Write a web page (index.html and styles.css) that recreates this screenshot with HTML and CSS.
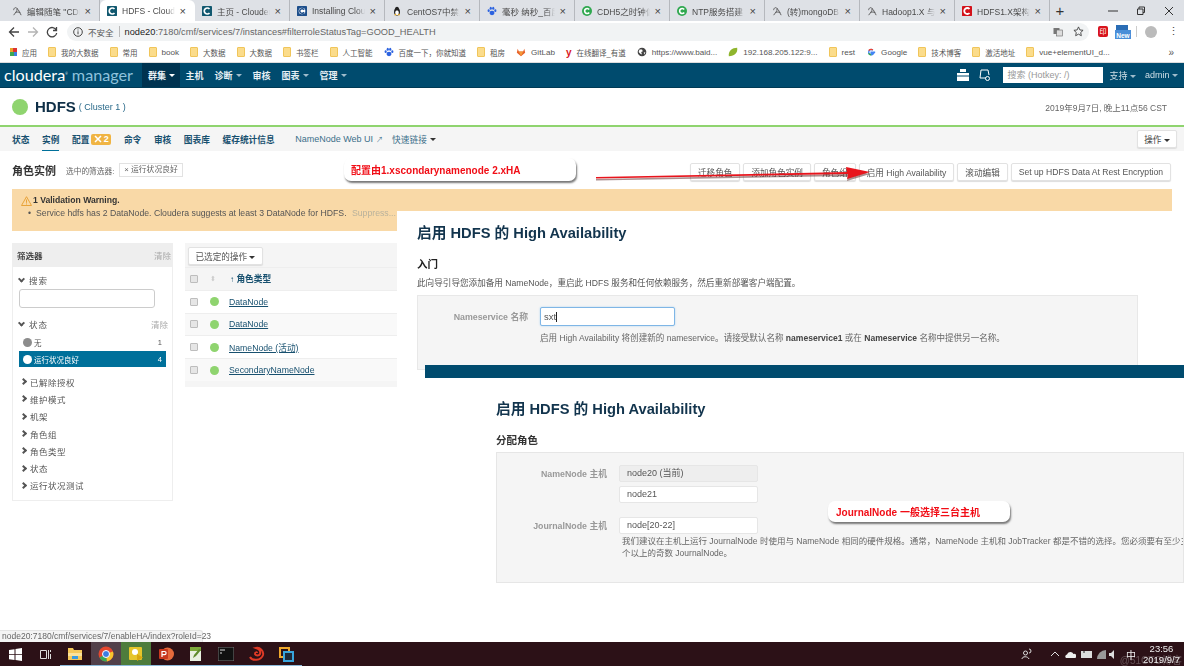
FILE: index.html
```html
<!DOCTYPE html>
<html lang="zh">
<head>
<meta charset="utf-8">
<title>HDFS - Cloudera Manager</title>
<link rel="stylesheet" href="styles.css">
</head>
<body>
<svg class="sprite" width="0" height="0">
  <symbol id="i-c" viewBox="0 0 12 12"><rect width="12" height="12" rx="1" fill="#11586f"/><path d="M9 3.6A3.6 3.6 0 1 0 9 8.4" fill="none" stroke="#fff" stroke-width="2"/></symbol>
  <symbol id="i-c2" viewBox="0 0 12 12"><rect width="12" height="12" rx="1" fill="#1d4f8c"/><circle cx="6" cy="6" r="4" fill="#fff"/><path d="M8.5 4.5A2.8 2.8 0 1 0 8.5 7.5" fill="none" stroke="#1d4f8c" stroke-width="1.8"/></symbol>
  <symbol id="i-r" viewBox="0 0 12 12"><rect width="12" height="12" rx="1" fill="#d3121a"/><path d="M9 3.6A3.6 3.6 0 1 0 9 8.4" fill="none" stroke="#fff" stroke-width="2.2"/></symbol>
  <symbol id="i-g" viewBox="0 0 12 12"><circle cx="6" cy="6" r="6" fill="#2fa84f"/><path d="M8.6 4.2A3 3 0 1 0 8.6 7.8" fill="none" stroke="#fff" stroke-width="2"/></symbol>
  <symbol id="i-s" viewBox="0 0 12 12"><path d="M2 5c0-3 3-4 4-2 1 3-3 6-4 8M6 3c2 1 3 5 5 8M4 8c2-1 4-1 6 0" fill="none" stroke="#555" stroke-width="1.1"/></symbol>
  <symbol id="i-t" viewBox="0 0 12 12"><ellipse cx="6" cy="7" rx="3.6" ry="4.6" fill="#222"/><ellipse cx="6" cy="8" rx="2.2" ry="3" fill="#fff"/><circle cx="6" cy="3" r="2.2" fill="#222"/><path d="M2.5 11h3l-1-2zM6.5 11h3l-1-2z" fill="#eda913"/></symbol>
  <symbol id="i-p" viewBox="0 0 12 12"><g fill="#2b62e0"><ellipse cx="6" cy="8.4" rx="3" ry="2.6"/><ellipse cx="2" cy="5.6" rx="1.3" ry="1.7"/><ellipse cx="4.5" cy="2.8" rx="1.3" ry="1.8"/><ellipse cx="7.5" cy="2.8" rx="1.3" ry="1.8"/><ellipse cx="10" cy="5.6" rx="1.3" ry="1.7"/></g></symbol>
  <symbol id="i-fox" viewBox="0 0 12 12"><path d="M6 11 1 7l1-5 1.500 3.500h5L10 2l1 5z" fill="#e8632b"/><path d="M6 11 3.500 5.500h5z" fill="#f39b3a"/></symbol>
  <symbol id="i-globe" viewBox="0 0 12 12"><circle cx="6" cy="6" r="5.200" fill="#444"/><path d="M3 3h3l1 2-2 1 1 3-2-1-2-2zM8 7l2-1-1 3z" fill="#fff"/></symbol>
  <symbol id="i-leaf" viewBox="0 0 12 12"><path d="M1 11C0 5 5 1 11 1c1 6-3 10-10 10z" fill="#8fb52d"/></symbol>
  <symbol id="i-goog" viewBox="0 0 12 12"><path d="M11 6.200H6.200v1.800h2.700A3.100 3.100 0 1 1 8.200 3.700" fill="none" stroke="#4285f4" stroke-width="1.700"/><path d="M3.300 4.400A3.200 3.200 0 0 1 8.200 3.700" fill="none" stroke="#ea4335" stroke-width="1.700"/><path d="M3.100 7.400A3.200 3.200 0 0 0 6.200 9.300" fill="none" stroke="#34a853" stroke-width="1.700"/></symbol>
</svg>

<div class="page">
  <header class="chrome-tabs">
    <div class="tab"><svg class="ico"><use href="#i-s"/></svg><span class="tab-t">编辑随笔 "CDH</span><span class="tab-x">×</span></div>
    <div class="tab is-active"><svg class="ico"><use href="#i-c"/></svg><span class="tab-t">HDFS - Clouder</span><span class="tab-x">×</span></div>
    <div class="tab"><svg class="ico"><use href="#i-c"/></svg><span class="tab-t">主页 - Clouder</span><span class="tab-x">×</span></div>
    <div class="tab"><svg class="ico"><use href="#i-c2"/></svg><span class="tab-t">Installing Cloud</span><span class="tab-x">×</span></div>
    <div class="tab"><svg class="ico"><use href="#i-t"/></svg><span class="tab-t">CentOS7中禁用</span><span class="tab-x">×</span></div>
    <div class="tab"><svg class="ico"><use href="#i-p"/></svg><span class="tab-t">毫秒 纳秒_百度</span><span class="tab-x">×</span></div>
    <div class="tab"><svg class="ico"><use href="#i-g"/></svg><span class="tab-t">CDH5之时钟偏</span><span class="tab-x">×</span></div>
    <div class="tab"><svg class="ico"><use href="#i-g"/></svg><span class="tab-t">NTP服务搭建 -</span><span class="tab-x">×</span></div>
    <div class="tab"><svg class="ico"><use href="#i-s"/></svg><span class="tab-t">(转)mongoDB</span><span class="tab-x">×</span></div>
    <div class="tab"><svg class="ico"><use href="#i-s"/></svg><span class="tab-t">Hadoop1.X 与</span><span class="tab-x">×</span></div>
    <div class="tab"><svg class="ico"><use href="#i-r"/></svg><span class="tab-t">HDFS1.X架构和</span><span class="tab-x">×</span></div>
    <span class="tab-plus">+</span>
    <div class="win-ctl">
      <svg width="10" height="10" viewBox="0 0 10 10"><path d="M0 5h10" stroke="#333"/></svg>
      <svg width="10" height="10" viewBox="0 0 10 10"><path d="M1.500 3h5.500v5.500H1.500zM3 3V1h5.500v5.500H7" fill="none" stroke="#333"/></svg>
      <svg width="10" height="10" viewBox="0 0 10 10"><path d="M1 1l8 8M9 1l-8 8" stroke="#333"/></svg>
    </div>
  </header>

  <div class="addr-row">
    <svg class="nav-b" width="12" height="12" viewBox="0 0 12 12"><path d="M11 6H1.500M6 1.500 1.500 6 6 10.500" fill="none" stroke="#444" stroke-width="1.300"/></svg>
    <svg class="nav-b" width="12" height="12" viewBox="0 0 12 12"><path d="M1 6h9.500M6 1.500 10.500 6 6 10.500" fill="none" stroke="#b4b4b4" stroke-width="1.300"/></svg>
    <svg class="nav-b" width="12" height="12" viewBox="0 0 12 12"><path d="M10.300 4.200A4.700 4.700 0 1 0 10.700 7M10.500 1v3.500H7" fill="none" stroke="#444" stroke-width="1.300"/></svg>
    <div class="omnibox">
      <svg width="10" height="10" viewBox="0 0 10 10"><circle cx="5" cy="5" r="4.300" fill="none" stroke="#444"/><path d="M5 4.300v3M5 2.500v1" stroke="#444"/></svg>
      <span class="insecure">不安全</span><span class="omni-sep"></span>
      <span class="url"><b>node20</b>:7180/cmf/services/7/instances#filterroleStatusTag=GOOD_HEALTH</span>
      <svg class="omni-end" width="10" height="10" viewBox="0 0 10 10"><rect x=".5" y="1" width="6" height="6" fill="#777"/><rect x="3.500" y="3" width="6" height="6" fill="#ddd" stroke="#666" stroke-width=".6"/></svg>
      <svg class="omni-star" width="11" height="11" viewBox="0 0 12 12"><path d="M6 1l1.500 3.300 3.500.4-2.600 2.400.7 3.500L6 8.900l-3.100 1.700.7-3.500L1 4.700l3.500-.4z" fill="none" stroke="#444"/></svg>
    </div>
    <div class="ext-area">
      <span class="ext-red">印</span>
      <span class="ext-new"><i></i>New</span>
      <span class="ext-sep"></span>
      <span class="avatar"></span>
      <span class="kebab">⋮</span>
    </div>
  </div>

  <nav class="bookmarks">
    <span class="bm bm-apps"><span class="apps-grid"></span>应用</span>
    <span class="bm"><i class="fold"></i>我的大数据</span>
    <span class="bm"><i class="fold"></i>常用</span>
    <span class="bm lat"><i class="fold"></i>book</span>
    <span class="bm"><i class="fold"></i>大数据</span>
    <span class="bm"><i class="fold"></i>大数据</span>
    <span class="bm"><i class="fold"></i>书签栏</span>
    <span class="bm"><i class="fold"></i>人工智能</span>
    <span class="bm"><svg class="ico"><use href="#i-p"/></svg>百度一下，你就知道</span>
    <span class="bm"><i class="fold"></i>租房</span>
    <span class="bm lat"><svg class="ico"><use href="#i-fox"/></svg>GitLab</span>
    <span class="bm"><b class="bm-y">y</b>在线翻译_有道</span>
    <span class="bm lat"><svg class="ico"><use href="#i-globe"/></svg>https://www.baid...</span>
    <span class="bm lat"><svg class="ico"><use href="#i-leaf"/></svg>192.168.205.122:9...</span>
    <span class="bm lat"><i class="fold"></i>rest</span>
    <span class="bm lat"><svg class="ico"><use href="#i-goog"/></svg>Google</span>
    <span class="bm"><i class="fold"></i>技术博客</span>
    <span class="bm"><i class="fold"></i>激活地址</span>
    <span class="bm lat"><i class="fold"></i>vue+elementUI_d...</span>
    <span class="bm-more">»</span>
  </nav>

  <div class="cm-nav">
    <div class="logo">cloudera<sup>®</sup> <em>manager</em></div>
    <ul class="cm-menu">
      <li class="is-on">群集 <i class="caret"></i></li>
      <li>主机</li>
      <li>诊断 <i class="caret dim"></i></li>
      <li>审核</li>
      <li>图表 <i class="caret dim"></i></li>
      <li>管理 <i class="caret dim"></i></li>
    </ul>
    <div class="cm-right">
      <svg width="12" height="12" viewBox="0 0 12 12"><path d="M0 4h12v8H0zM3 0h6v3H3z" fill="#fff"/><path d="M0 7h12" stroke="#004b6e"/></svg>
      <svg width="12" height="12" viewBox="0 0 12 12"><path d="M2 9 3 1h7l1 5M2 9h6" fill="none" stroke="#fff"/><circle cx="9.500" cy="9.500" r="2" fill="none" stroke="#fff"/></svg>
      <input class="cm-search" placeholder="搜索 (Hotkey: /)">
      <span class="cm-link">支持 <i class="caret dim"></i></span>
      <span class="cm-link">admin <i class="caret dim"></i></span>
    </div>
  </div>

  <div class="svc-head">
    <i class="dot dot-lg"></i>
    <h1>HDFS</h1>
    <span class="cluster">( Cluster 1 )</span>
    <span class="svc-date">2019年9月7日, 晚上11点56 CST</span>
  </div>

  <div class="svc-tabs">
    <a>状态</a>
    <a class="is-active">实例</a>
    <a class="with-badge">配置<span class="badge"><svg width="8" height="8" viewBox="0 0 8 8"><path d="M1 1l6 6M7 1 1 7" stroke="#fff" stroke-width="1.500"/></svg> 2</span></a>
    <a>命令</a>
    <a>审核</a>
    <a>图表库</a>
    <a>缓存统计信息</a>
    <a class="plain lead">NameNode Web UI <small>↗</small></a>
    <a class="plain">快速链接 <i class="caret dark"></i></a>
    <button class="btn btn-ops">操作 <i class="caret dark"></i></button>
  </div>

  <div class="inst-head">
    <h2 class="inst-title">角色实例</h2>
    <span class="filter-lab">选中的筛选器:</span>
    <span class="chip">× 运行状况良好</span>
    <div class="inst-btns">
      <button class="btn">迁移角色</button>
      <button class="btn">添加角色实例</button>
      <button class="btn">角色组</button>
      <button class="btn">启用 High Availability</button>
      <button class="btn">滚动编辑</button>
      <button class="btn">Set up HDFS Data At Rest Encryption</button>
    </div>
  </div>

  <div class="warn">
    <div class="warn-t"><svg width="11" height="10" viewBox="0 0 11 10"><path d="M5.500.7 10.500 9.500H.5z" fill="none" stroke="#e8a33a"/><path d="M5.500 3.500v3.300M5.500 7.500v1" stroke="#e8a33a"/></svg> <b>1 Validation Warning.</b></div>
    <div class="warn-l"><span class="warn-b">•</span>Service hdfs has 2 DataNode. Cloudera suggests at least 3 DataNode for HDFS. <span class="warn-s">Suppress...</span></div>
  </div>

  <div class="workspace">
    <aside class="filters">
      <div class="f-head"><b>筛选器</b><span class="clear">清除</span></div>
      <div class="f-sec f-open"><i class="chev-d"></i>搜索</div>
      <input class="f-input">
      <div class="f-sec f-open f-status"><i class="chev-d"></i>状态<span class="clear">清除</span></div>
      <div class="f-opt"><i class="dot dot-gray"></i>无<span class="cnt">1</span></div>
      <div class="f-opt is-sel"><i class="dot dot-white"></i>运行状况良好<span class="cnt">4</span></div>
      <ul class="f-list">
        <li><i class="chev-r"></i>已解除授权</li>
        <li><i class="chev-r"></i>维护模式</li>
        <li><i class="chev-r"></i>机架</li>
        <li><i class="chev-r"></i>角色组</li>
        <li><i class="chev-r"></i>角色类型</li>
        <li><i class="chev-r"></i>状态</li>
        <li><i class="chev-r"></i>运行状况测试</li>
      </ul>
    </aside>
    <section class="roles">
      <div class="r-bar"><button class="btn btn-sel">已选定的操作 <i class="caret dark"></i></button></div>
      <div class="r-row r-head"><i class="cb"></i><span class="sort">⬍</span><b><span class="sort-a">↑</span> 角色类型</b></div>
      <div class="r-row"><i class="cb"></i><i class="dot"></i><a>DataNode</a></div>
      <div class="r-row alt"><i class="cb"></i><i class="dot"></i><a>DataNode</a></div>
      <div class="r-row"><i class="cb"></i><i class="dot"></i><a>NameNode (活动)</a></div>
      <div class="r-row alt"><i class="cb"></i><i class="dot"></i><a>SecondaryNameNode</a></div>
    </section>
  </div>

  <div class="sheet">
    <h2 class="ha-title">启用 HDFS 的 High Availability</h2>
    <h3 class="ha-sub">入门</h3>
    <p class="ha-desc">此向导引导您添加备用 NameNode，重启此 HDFS 服务和任何依赖服务，然后重新部署客户端配置。</p>
    <div class="ha-panel">
      <label class="ha-label">Nameservice 名称</label>
      <div class="ha-fake-input">sxt<span class="cursor"></span></div>
      <p class="ha-help">启用 High Availability 将创建新的 nameservice。请接受默认名称 <b>nameservice1</b> 或在 <b>Nameservice</b> 名称中提供另一名称。</p>
    </div>
    <div class="ha-bar"></div>
    <div class="second">
      <h2 class="ha-title">启用 HDFS 的 High Availability</h2>
      <h3 class="ha-sub sub2">分配角色</h3>
      <div class="assign">
        <div class="a-row"><label>NameNode 主机</label><div class="a-in ro">node20 (当前)</div></div>
        <div class="a-row r2"><label></label><div class="a-in">node21</div></div>
        <div class="a-row r3"><label>JournalNode 主机</label><div class="a-in">node[20-22]</div></div>
        <p class="a-help">我们建议在主机上运行 JournalNode 时使用与 NameNode 相同的硬件规格。通常，NameNode 主机和 JobTracker 都是不错的选择。您必须要有至少三<br>个以上的奇数 JournalNode。</p>
      </div>
    </div>
  </div>

  <div class="callout c1">配置由1.xscondarynamenode 2.xHA</div>
  <div class="callout c2">JournalNode 一般选择三台主机</div>
  <svg class="arrow" width="280" height="24" viewBox="0 0 280 24">
    <path d="M6 16.500 258 12l-1 5 23-7-24-5 1 5L6 15z" fill="#5a2020" opacity=".5" transform="translate(0 2)"/>
    <path d="M6 16.500 258 12l-1 5 23-7-24-5 1 5L6 15z" fill="#e8141c"/>
  </svg>
  <div class="status-tip">node20:7180/cmf/services/7/enableHA/index?roleId=23</div>

  <footer class="taskbar">
    <span class="tb"><svg width="13" height="13" viewBox="0 0 13 13"><path d="M0 2l5.500-.8v5H0zM6.500 1l6.500-1v6.200H6.500zM0 7h5.500v5L0 11.200zM6.500 7H13v6l-6.500-1z" fill="#fff"/></svg></span>
    <span class="tb"><svg width="13" height="13" viewBox="0 0 13 13"><path d="M1.500 2.500h6v8h-6zM9.500 2v9M11.500 2v2M11.500 6v5" fill="none" stroke="#ddd"/></svg></span>
    <span class="tb"><svg width="16" height="14" viewBox="0 0 16 14"><path d="M1 1h5l1 2h8v10H1z" fill="#f5c85a"/><path d="M1 6h14v3H1z" fill="#fbe29a"/><path d="M5 9h6v3H5z" fill="#3a9be0"/></svg></span>
    <span class="tb on"><svg width="16" height="16" viewBox="0 0 16 16"><circle cx="8" cy="8" r="7.500" fill="#e4472f"/><path d="M8 8 1.500 11.500A7.500 7.500 0 0 0 9 15.400z" fill="#3aa655"/><path d="M8 8l6.900-2.600A7.500 7.500 0 0 1 9 15.400z" fill="#f7c52d"/><circle cx="8" cy="8" r="3.500" fill="#3b7de2" stroke="#fff"/></svg></span>
    <span class="tb on2"><svg width="16" height="16" viewBox="0 0 16 16"><rect x="1" y="1" width="13" height="13" rx="1" fill="#e6c52a"/><circle cx="7" cy="6" r="3" fill="#fff"/><path d="M9 8l6 3.500-6 3.500z" fill="#d9a70f"/></svg></span>
    <span class="tb"><svg width="16" height="16" viewBox="0 0 16 16"><circle cx="9.500" cy="8" r="6.500" fill="#e66a3c"/><rect x="1" y="3" width="9" height="10" rx="1" fill="#c8391f"/><path d="M4 11V5.500h2.500a1.600 1.600 0 0 1 0 3.200H4" fill="none" stroke="#fff" stroke-width="1.200"/></svg></span>
    <span class="tb"><svg width="16" height="16" viewBox="0 0 16 16"><path d="M2 1h11v14H2z" fill="#e9f0e0"/><path d="M2 1h11v4H2z" fill="#7da83a"/><path d="M5 12l1-3 5-6 2 1-5 6z" fill="#5f8a2c"/></svg></span>
    <span class="tb"><svg width="16" height="14" viewBox="0 0 16 14"><rect width="16" height="14" fill="#111" stroke="#777"/><path d="M2 3h5M2 6h2" stroke="#ddd"/></svg></span>
    <span class="tb"><svg width="16" height="16" viewBox="0 0 16 16"><path d="M1 11c2 4 11 4 13-2 1-4-3-8-7-7 3 1 5 3 4 6-1 2-4 2-5 0 0-2 2-2 2-1" fill="none" stroke="#df3a26" stroke-width="2"/></svg></span>
    <span class="tb"><svg width="15" height="15" viewBox="0 0 15 15"><path d="M1 1h9v9H1z" fill="none" stroke="#f0a82c" stroke-width="2"/><path d="M5 5h9v9H5z" fill="#1e2a3a" stroke="#38a4dc" stroke-width="2"/></svg></span>
    <div class="tray">
      <svg width="12" height="12" viewBox="0 0 12 12"><circle cx="4.500" cy="5" r="2" fill="none" stroke="#ddd"/><path d="M1 11c0-3 6-3 7 0M8 1a2 2 0 1 1 0 4" fill="none" stroke="#ddd"/></svg>
      <svg class="t-up" width="10" height="6" viewBox="0 0 10 6"><path d="M1 5l4-4 4 4" fill="none" stroke="#ddd"/></svg>
      <svg width="11" height="7" viewBox="0 0 11 7"><path d="M1 7a2 2 0 0 1 1-3.500A3.500 3.500 0 0 1 8.500 3 2 2 0 0 1 10 7z" fill="#eee"/></svg>
      <svg width="11" height="7" viewBox="0 0 11 7"><rect width="11" height="7" y="0" fill="#ddd"/><path d="M3 0v2" stroke="#222"/></svg>
      <svg width="9" height="9" viewBox="0 0 9 9"><path d="M0 9a9 9 0 0 1 9-9v9z" fill="#999"/></svg>
      <svg class="t-snd" width="9" height="9" viewBox="0 0 9 9"><path d="M0 3h2l3-3v9L2 6H0z" fill="#ddd"/></svg>
      <span class="t-ime">中</span>
      <div class="clock"><span>23:56</span><span>2019/9/7</span></div>
      <span class="wm">@51CTO博客</span>
    </div>
  </footer>
</div>
</body>
</html>
```
FILE: styles.css
```css
* { box-sizing: border-box; }
html, body { margin: 0; padding: 0; width: 1184px; height: 666px; overflow: hidden; background: #fff; }
body { font-family: "Liberation Sans", "Noto Sans CJK SC", sans-serif; font-size: 9.5px; color: #555; }
.sprite { position: absolute; }
h1, h2, h3, p, ul { margin: 0; padding: 0; }
ul { list-style: none; }
i { font-style: normal; }
.page { position: relative; width: 1184px; height: 666px; display: flex; flex-direction: column; overflow: hidden; filter: blur(.35px); }

/* browser tab strip */
.chrome-tabs { height: 21px; background: #dee1e6; display: flex; align-items: stretch; padding-left: 5px; flex: none; }
.tab { width: 95px; flex: none; display: flex; align-items: center; padding: 0 8px 0 7px; gap: 5px; font-size: 8.500px; color: #4a4a4a; border-right: 1px solid #b5b8bd; }
.tab.is-active { background: #fff; border-radius: 6px 6px 0 0; border-right-color: transparent; }
.ico { width: 10px; height: 10px; flex: none; }
.tab-t { flex: 1; white-space: nowrap; overflow: hidden; -webkit-mask-image: linear-gradient(90deg, #000 85%, transparent); mask-image: linear-gradient(90deg, #000 85%, transparent); }
.tab-x { font-size: 11px; color: #444; flex: none; }
.tab-plus { width: 20px; text-align: center; font-size: 15px; line-height: 21px; color: #333; }
.win-ctl { margin-left: auto; display: flex; align-items: center; gap: 18px; padding-right: 10px; }

/* address row */
.addr-row { height: 21px; flex: none; background: #fff; display: flex; align-items: center; padding-left: 8px; gap: 7px; }
.omnibox { margin-left: 2px; width: 1022px; height: 18px; background: #f1f3f4; border-radius: 9px; display: flex; align-items: center; padding: 0 5px 0 6px; font-size: 8.500px; color: #666; }
.insecure { margin-left: 5px; color: #555; }
.omni-sep { width: 1px; height: 11px; background: #bbb; margin: 0 5px; }
.url { color: #666; font-size: 9.250px; white-space: nowrap; }
.url b { font-weight: 400; color: #222; }
.omni-end { margin-left: auto; }
.omni-star { margin-left: 10px; }
.ext-area { display: flex; align-items: center; margin-left: 2px; flex: 1; }
.ext-red { width: 10px; height: 11px; background: #d8141c; color: #fff; font-size: 7px; line-height: 11px; text-align: center; border-radius: 2px; }
.ext-new { margin-left: 7px; position: relative; width: 16px; height: 15px; color: #fff; font-size: 6.500px; line-height: 7px; font-weight: 700; text-align: center; padding-top: 8px; background: linear-gradient(#fff 40%, #4a8ed8 40%); }
.ext-new i { position: absolute; left: 1px; top: 1px; width: 12px; height: 5px; background: #2a6db5; }
.ext-sep { width: 1px; height: 11px; background: #ccc; margin-left: 5px; }
.avatar { width: 12px; height: 12px; border-radius: 50%; background: #bbb; margin-left: 8px; }
.kebab { margin-left: 11px; font-size: 11px; color: #444; }

/* bookmarks */
.bookmarks { height: 21px; flex: none; display: flex; align-items: center; padding-left: 10px; gap: 11px; font-size: 7.500px; color: #555; background: #fff; white-space: nowrap; border-bottom: 1px solid #ddd; }
.bm { display: inline-flex; align-items: center; gap: 5px; }
.bm.lat { font-size: 8.100px; }
.fold { width: 8px; height: 10px; background: #fbdc8b; border: 1px solid #f0c55a; border-radius: 1px; }
.apps-grid { width: 7px; height: 8px; background: conic-gradient(#d33 0 25%, #3b7de2 0 50%, #3aa655 0 75%, #e8a32a 0); }
.bm-y { color: #d8141c; font-size: 10px; font-weight: 700; }
.bm-more { margin-left: auto; padding-right: 10px; font-size: 10px; }

/* cloudera nav */
.cm-nav { height: 25px; flex: none; background: #004b6e; display: flex; align-items: stretch; color: #fff; border-bottom: 1px solid #003a55; }
.logo { width: 142px; padding-left: 4px; font-family: Lato, "Liberation Sans", sans-serif; font-size: 16.200px; line-height: 23px; color: #fff; white-space: nowrap; }
.logo sup { font-size: 3px; }
.logo em { font-style: normal; color: #8fc2dc; }
.cm-menu { display: flex; font-size: 9px; font-weight: 700; color: #e8f0f4; white-space: nowrap; }
.cm-menu li { display: flex; align-items: center; gap: 3px; padding: 0 5.500px; }
.cm-menu li.is-on { background: #003350; width: 38px; padding: 0 0 0 6px; }
.caret { width: 0; height: 0; border: 3px solid transparent; border-top-color: #fff; border-bottom: 0; display: inline-block; vertical-align: middle; flex: none; }
.caret.dim { border-top-color: #9fbccb; }
.caret.dark { border-top-color: #333; }
.cm-right { margin-left: auto; display: flex; align-items: center; gap: 9px; padding-right: 6px; font-size: 9px; color: #d0dfe7; }
.cm-search { width: 100px; height: 16px; border: 0; padding: 0 4px; font-size: 9px; font-family: inherit; background: #fff; margin: 0 -3px 0 4px; }
.cm-search::placeholder { color: #999; }
.cm-link { white-space: nowrap; }

/* service head */
.svc-head { height: 39px; flex: none; display: flex; align-items: center; padding: 0 17px 0 12px; border-bottom: 2px solid #8fd46f; }
.dot { width: 9px; height: 9px; border-radius: 50%; background: #8fd46f; display: inline-block; flex: none; }
.dot-lg { width: 16px; height: 16px; }
.svc-head h1 { margin-left: 7px; font-size: 15px; color: #0f2f47; font-weight: 700; }
.cluster { margin-left: 3px; font-size: 9px; color: #2a6a8a; }
.svc-date { margin-left: auto; font-size: 8.500px; color: #666; }

/* tabs */
.svc-tabs { height: 24px; flex: none; background: #f5f5f5; display: flex; align-items: center; padding: 0 7px 0 12px; font-size: 8.700px; color: #17506f; font-weight: 700; position: relative; }
.svc-tabs a { margin-right: 12.600px; white-space: nowrap; display: inline-flex; align-items: center; height: 24px; gap: 3px; }
.svc-tabs a.is-active { box-shadow: 0 -1px 0 #00709a inset; color: #17506f; }
.svc-tabs a.plain { font-weight: 400; color: #3c6f8a; }
.svc-tabs a.lead { margin-left: 8px; margin-right: 9px; font-size: 9px; }
.svc-tabs a small { font-size: 7px; }
.badge { margin-left: -1px; background: #f0b443; color: #fff; width: 20px; height: 11px; border-radius: 2px; display: inline-flex; align-items: center; justify-content: center; gap: 2px; font-size: 9px; }
.btn { height: 18px; padding: 0 7px; font: inherit; font-size: 8.600px; font-weight: 400; color: #555; background: #fff; border: 1px solid #e2e2e2; border-radius: 2px; white-space: nowrap; box-shadow: 0 1px 1px #ddd; }
.btn-ops { margin-left: auto; width: 40px; padding: 0; color: #444; }

/* instance head */
.inst-head { height: 38px; flex: none; display: flex; align-items: center; padding: 0 13px 0 12px; }
.inst-title { font-size: 11px; color: #333; font-weight: 700; }
.filter-lab { margin-left: 10px; font-size: 7.700px; color: #666; }
.chip { margin-left: 5px; border: 1px solid #e2e2e2; padding: 0 4px; height: 14px; line-height: 12px; font-size: 7.800px; color: #666; }
.inst-btns { margin-left: auto; display: flex; gap: 3px; margin-top: 4px; }

/* warning */
.warn { flex: none; margin: 0 12px; height: 42px; background: #f9d9a7; padding: 5px 9px; color: #444; }
.warn-t { display: flex; align-items: center; gap: 1px; font-size: 8.600px; color: #333; line-height: 13px; }
.warn-l { margin-top: 0; font-size: 8.700px; line-height: 12px; padding-left: 7px; white-space: nowrap; color: #555; }
.warn-b { margin-right: 5px; }
.warn-s { color: #b9b29c; margin-left: 3px; }

/* workspace */
.workspace { flex: none; display: flex; align-items: flex-start; padding: 12px 0 0 12px; gap: 12px; }
.filters { width: 161px; height: 258px; border: 1px solid #eee; border-top: 0; flex: none; color: #555; }
.f-head { height: 24px; margin: 0 -1px; background: #eee; display: flex; align-items: center; justify-content: space-between; padding: 0 2px 0 5px; font-size: 8.500px; color: #444; }
.f-head b { font-weight: 700; }
.clear { color: #aaa; font-size: 8.500px; }
.f-sec { display: flex; align-items: center; padding-left: 4px; height: 14px; margin-top: 6px; letter-spacing: 1px; font-size: 8.500px; }
.chev-d { width: 5px; height: 5px; border: solid #555; border-width: 0 2px 2px 0; transform: rotate(45deg) translate(-1px,-1px); margin: 0 5px 0 2px; }
.chev-r { width: 5px; height: 5px; border: solid #555; border-width: 2px 2px 0 0; transform: rotate(45deg); margin: 0 4px 0 0; flex: none; }
.f-input { display: block; margin: 2px 0 0 6px; width: 136px; height: 19px; border: 1px solid #ccc; border-radius: 3px; background: #fff; }
.f-status { margin-top: 9px; padding-right: 4px; }
.f-status .clear { margin-left: auto; letter-spacing: 0; }
.f-opt { display: flex; align-items: center; margin: 3px 6px 0; height: 16px; padding: 0 4px; font-size: 7.500px; gap: 2px; }
.f-opt .cnt { margin-left: auto; }
.dot-gray { background: #8c8c8c; }
.f-opt.is-sel { background: #00709a; color: #fff; margin-top: 1px; }
.dot-white { background: #fff; }
.f-list { margin-top: 6px; }
.f-list li { display: flex; align-items: center; height: 17.300px; padding-left: 8px; font-size: 8.500px; letter-spacing: .5px; }

.roles { width: 212px; height: 144px; background: #f5f5f5; flex: none; }
.r-bar { height: 24px; padding: 4px 3px 0; }
.btn-sel { width: 75px; padding: 0; }
.r-row { display: flex; align-items: center; height: 22.800px; padding-left: 5px; background: #fff; border-top: 1px solid #eee; font-size: 8.700px; }
.r-row.alt { background: #f9f9f9; }
.r-row a { margin-left: 10px; color: #17506f; text-decoration: underline; white-space: nowrap; }
.r-row .dot { margin-left: 12px; }
.r-head { background: #f5f5f5; color: #17506f; }
.r-head b { margin-left: 11px; font-weight: 700; }
.sort { margin-left: 12px; width: 9px; color: #ccc; font-size: 7px; }
.sort-a { font-size: 8px; }
.cb { width: 8px; height: 8px; background: #e6e6e6; border: 1px solid #bdbdbd; border-radius: 1px; flex: none; }

/* pasted wizard sheet */
.sheet { position: absolute; left: 397px; top: 211px; right: 0; bottom: 24px; background: #fff; padding: 12px 0 0 20px; overflow: hidden; color: #666; }
.ha-title { font-size: 14.700px; line-height: 20px; font-weight: 700; color: #12344d; white-space: nowrap; }
.ha-sub { font-size: 10.500px; line-height: 16px; margin-top: 13px; color: #222; font-weight: 700; }
.ha-desc { font-size: 8.600px; line-height: 12px; margin-top: 5px; color: #555; white-space: nowrap; }
.ha-panel { width: 721px; height: 75px; margin-top: 6px; background: #f5f5f5; border: 1px solid #e8e8e8; display: grid; grid-template-columns: 122px 135px; grid-template-rows: 19px auto; align-content: start; padding-top: 11px; }
.ha-label { justify-self: end; padding-right: 12px; align-self: center; font-size: 8.800px; font-weight: 700; color: #999; }
.ha-fake-input { background: #fff; border: 1px solid #7fb6e6; border-radius: 2px; font-size: 9.500px; line-height: 17px; padding-left: 3px; color: #555; box-shadow: 0 0 2px #a9d0f0; }
.cursor { display: inline-block; width: 1px; height: 10px; background: #222; vertical-align: middle; }
.ha-help { grid-column: 2 / 4; margin-top: 6px; font-size: 8.550px; line-height: 12px; white-space: nowrap; width: 500px; color: #666; }
.ha-help b { color: #444; }
.ha-bar { margin: -5px 0 0 8px; height: 13px; background: #004b6e; position: relative; }
.second { margin-left: 79px; padding-top: 21px; }
.sub2 { margin-top: 13px; font-size: 10.500px; color: #333; }
.assign { margin-top: 4px; height: 131px; background: #f5f5f5; border: 1px solid #e6e6e6; padding-top: 12px; overflow: hidden; }
.a-row { display: flex; align-items: center; height: 17px; }
.a-row label { width: 110px; padding-right: 0; text-align: right; font-size: 8.800px; font-weight: 700; color: #999; white-space: nowrap; }
.a-in { margin-left: 12px; width: 139px; height: 17px; background: #fff; border: 1px solid #e6e6e6; border-radius: 2px; padding-left: 7px; font-size: 9px; line-height: 15px; color: #555; }
.a-in.ro { background: #eee; }
.r2 { margin-top: 4px; }
.r3 { margin-top: 14px; }
.a-help { margin: 1px 0 0 125px; font-size: 8.500px; line-height: 12px; white-space: nowrap; color: #666; }

/* annotations */
.callout { position: absolute; background: #fff; color: #f10d16; font-weight: 700; border-radius: 7px; box-shadow: 1px 2px 2px #777; white-space: nowrap; display: flex; align-items: center; }
.c1 { left: 344px; top: 158px; width: 232px; height: 23px; padding-left: 7px; font-size: 10px; }
.c2 { left: 828px; top: 501px; width: 182px; height: 21px; padding-left: 8px; font-size: 10px; }
.arrow { position: absolute; left: 590px; top: 162px; }
.status-tip { position: absolute; left: 0; top: 630px; height: 12px; width: 203px; background: #f4f4f4; border: 1px solid #e4e4e4; border-left: 0; border-bottom: 0; border-radius: 0 3px 0 0; padding-left: 2px; font-size: 8.500px; line-height: 11px; color: #666; white-space: nowrap; }

/* taskbar */
.taskbar { position: absolute; left: 0; right: 0; bottom: 0; height: 24px; background: #2c1117; display: flex; align-items: center; }
.tb { width: 30.200px; height: 24px; flex: none; display: flex; align-items: center; justify-content: center; box-shadow: 0 -1px 0 #8dbbdc inset; }
.tb:nth-child(1), .tb:nth-child(2) { box-shadow: none; }
.tb.on { background: #52404a; }
.tb.on2 { background: #4e7c3c; }
.tray { position: relative; margin-left: auto; display: flex; align-items: center; gap: 5px; padding-right: 4px; color: #eee; }
.t-up { margin-left: 12px; }
.t-snd { margin-left: -2px; }
.t-ime { font-size: 10px; color: #eee; margin-left: 3px; }
.clock { display: flex; flex-direction: column; align-items: center; font-size: 9.500px; line-height: 11px; color: #eee; margin-left: 2px; }
.wm { position: absolute; right: 2px; top: 9px; font-size: 10px; color: rgba(255,255,255,.25); white-space: nowrap; }
```
